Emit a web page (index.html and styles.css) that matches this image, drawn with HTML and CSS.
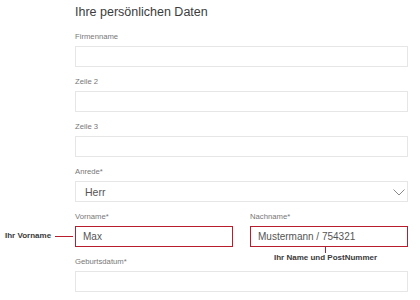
FILE: index.html
```html
<!DOCTYPE html>
<html lang="de">
<head>
<meta charset="utf-8">
<title>Ihre persönlichen Daten</title>
<link rel="stylesheet" href="styles.css">
</head>
<body>
<div class="page">
  <form class="form">
    <h1 class="title">Ihre persönlichen Daten</h1>
    <div class="field">
      <label class="label">Firmenname</label>
      <div class="input"></div>
    </div>
    <div class="field">
      <label class="label">Zeile 2</label>
      <div class="input"></div>
    </div>
    <div class="field">
      <label class="label">Zeile 3</label>
      <div class="input"></div>
    </div>
    <div class="field">
      <label class="label">Anrede*</label>
      <div class="input select">
        <span class="value select-value">Herr</span>
        <svg class="chevron" width="12" height="7" viewBox="0 0 12 7"><polyline points="0.5,0.5 6,6 11.5,0.5" fill="none" stroke="#8a8a8a" stroke-width="1"/></svg>
      </div>
    </div>
    <div class="row">
      <div class="field">
        <label class="label">Vorname*</label>
        <div class="input marked"><span class="value">Max</span></div>
        <div class="callout callout-left">
          <span class="callout-text">Ihr Vorname</span>
          <span class="hline"></span>
        </div>
      </div>
      <div class="field">
        <label class="label">Nachname*</label>
        <div class="input marked"><span class="value">Mustermann / 754321</span></div>
        <div class="callout callout-below">
          <span class="vline"></span>
          <span class="callout-text">Ihr Name und PostNummer</span>
        </div>
      </div>
    </div>
    <div class="field">
      <label class="label">Geburtsdatum*</label>
      <div class="input"></div>
    </div>
  </form>
</div>
</body>
</html>
```
FILE: styles.css
```css
html, body {
  margin: 0;
  padding: 0;
  background: #ffffff;
}
body {
  font-family: "Liberation Sans", Arial, sans-serif;
}
.page {
  padding: 5px 12px 0 75px;
}
.form {
  width: 333px;
  display: flex;
  flex-direction: column;
}
.title {
  margin: 0 0 12px 0;
  font-size: 12.5px;
  line-height: 15px;
  font-weight: normal;
  color: #3c3c3c;
}
.field {
  display: flex;
  flex-direction: column;
  margin-bottom: 10px;
  position: relative;
}
.label {
  font-size: 7.7px;
  line-height: 10px;
  color: #777777;
  margin-bottom: 4px;
}
.input {
  box-sizing: border-box;
  height: 21px;
  border: 1px solid #e6e6e6;
  background: #ffffff;
  display: flex;
  align-items: center;
  padding: 0 7px;
}
.value {
  font-size: 10px;
  color: #555555;
}
.select {
  justify-content: space-between;
  padding: 0 2px 0 9px;
}
.select-value {
  font-size: 10.5px;
}
.chevron {
  display: block;
  margin-top: 1px;
}
.row {
  display: grid;
  grid-template-columns: 1fr 1fr;
  column-gap: 17px;
}
.marked {
  border-color: #b81d2e;
}
.callout {
  position: absolute;
  display: flex;
}
.callout-text {
  font-size: 8px;
  font-weight: bold;
  color: #3a3a3a;
  white-space: nowrap;
  line-height: 10px;
}
.callout-left {
  left: -70px;
  top: 19px;
  align-items: center;
}
.hline {
  display: block;
  width: 18px;
  height: 1px;
  background: #b81d2e;
  margin-left: 4px;
}
.callout-below {
  left: 24px;
  top: 35px;
  flex-direction: column;
  align-items: center;
}
.vline {
  display: block;
  width: 1px;
  height: 6px;
  background: #b81d2e;
}
```
